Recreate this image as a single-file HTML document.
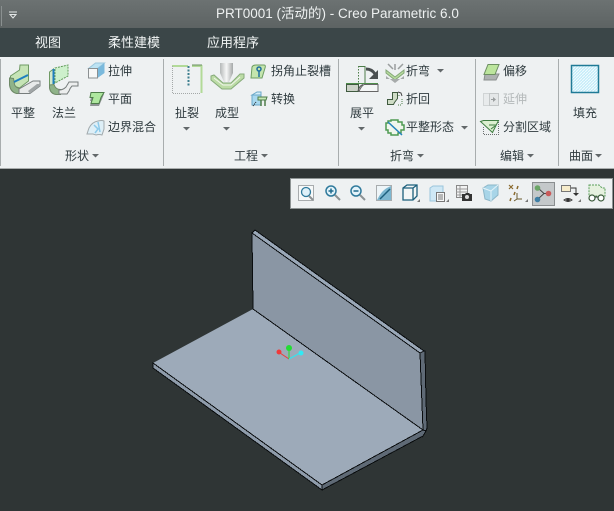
<!DOCTYPE html>
<html><head><meta charset="utf-8"><style>
html,body{margin:0;padding:0}
body{width:614px;height:511px;overflow:hidden;position:relative;background:#2f3535;font-family:"Liberation Sans","Noto Sans CJK SC",sans-serif}
.t{position:absolute;font-size:12px;line-height:16px;color:#2e3a3e;white-space:nowrap}
.m{position:absolute;font-size:13px;line-height:18px;color:#f2f5f5;white-space:nowrap;top:34px}
svg{position:absolute;left:0;top:0}
</style></head><body>
<div style="position:absolute;left:0;top:0;width:614px;height:28px;background:linear-gradient(#6c7272,#5d6363)"></div>
<div style="position:absolute;left:0;top:28px;width:614px;height:29px;background:#3b4648"></div>
<div style="position:absolute;left:0;top:57px;width:614px;height:111px;background:#eef1f2;border-bottom:1px solid #a9adad"></div>
<div style="position:absolute;left:290px;top:178px;width:323px;height:31px;background:#eef1f2;border:1px solid #8e9494;box-sizing:border-box"></div>
<div style="position:absolute;left:216px;top:5px;font-size:13.5px;line-height:18px;color:#eef1f1;white-space:nowrap">PRT0001 (活动的) - Creo Parametric 6.0</div>
<div class="m" style="left:35px">视图</div>
<div class="m" style="left:108px">柔性建模</div>
<div class="m" style="left:207px">应用程序</div>

<div class="t" style="left:11px;top:105px">平整</div>
<div class="t" style="left:52px;top:105px">法兰</div>
<div class="t" style="left:108px;top:63px">拉伸</div>
<div class="t" style="left:108px;top:91px">平面</div>
<div class="t" style="left:108px;top:119px">边界混合</div>
<div class="t" style="left:65px;top:148px">形状</div>
<div class="t" style="left:175px;top:105px">扯裂</div>
<div class="t" style="left:215px;top:105px">成型</div>
<div class="t" style="left:271px;top:63px">拐角止裂槽</div>
<div class="t" style="left:271px;top:91px">转换</div>
<div class="t" style="left:234px;top:148px">工程</div>
<div class="t" style="left:350px;top:105px">展平</div>
<div class="t" style="left:406px;top:63px">折弯</div>
<div class="t" style="left:406px;top:91px">折回</div>
<div class="t" style="left:406px;top:119px">平整形态</div>
<div class="t" style="left:390px;top:148px">折弯</div>
<div class="t" style="left:503px;top:63px">偏移</div>
<div class="t" style="left:503px;top:91px;color:#b4b9ba">延伸</div>
<div class="t" style="left:503px;top:119px">分割区域</div>
<div class="t" style="left:500px;top:148px">编辑</div>
<div class="t" style="left:573px;top:105px">填充</div>
<div class="t" style="left:569px;top:148px">曲面</div>

<svg width="614" height="511" viewBox="0 0 614 511">
<defs>
<linearGradient id="pn"><stop offset="0" stop-color="#b4b8b8"/><stop offset=".5" stop-color="#f6f7f7"/><stop offset="1" stop-color="#a4a8a8"/></linearGradient>
<pattern id="h" width="3" height="3" patternUnits="userSpaceOnUse"><rect width="3" height="3" fill="#c4ecf9"/><path d="M0 3L3 0" stroke="#f2fbfe"/></pattern>
</defs>
<!-- title bar -->
<rect x="1" y="6" width="1" height="20" fill="#8a9090"/>
<path d="M9 12h8M10 14.500h6l-3 3.500z" fill="none" stroke="#e4e8e8"/>
<!-- separators -->
<g fill="#a8adae"><rect x="0" y="59" width="1" height="107"/><rect x="163" y="59" width="1" height="107"/><rect x="338" y="59" width="1" height="107"/><rect x="475" y="59" width="1" height="107"/><rect x="558" y="59" width="1" height="107"/></g>
<!-- dropdown arrows -->
<g fill="#62686a">
<path d="M92 154h7l-3.500 3.500z"/><path d="M261 154h7l-3.500 3.500z"/><path d="M417 154h7l-3.500 3.500z"/><path d="M527 154h7l-3.500 3.500z"/><path d="M595 154h7l-3.500 3.500z"/>
<path d="M183 127h7l-3.500 3.500z"/><path d="M223 127h7l-3.500 3.500z"/><path d="M358 127h7l-3.500 3.500z"/>
<path d="M437 69h7l-3.500 3.500z"/><path d="M461 126h7l-3.500 3.500z"/>
</g>
<!-- 平整 -->
<path d="M20 65h8.500v16l-9 7-9-3v-9l9-6z" fill="#c6e4b6" stroke="#6f9a64"/>
<path d="M9.500 78v7q1 7 7 8.500h3v-5q-4-1-5-4l-1-6z" fill="#8fb389" stroke="#6f8a68"/>
<path d="M19 89l14-8h7v5l-10 7.500h-11z" fill="#e8eaea" stroke="#777d7d"/>
<path d="M28 91l9-7h3v2l-10 7.500z" fill="#a0a5a6"/>
<path d="M14 82l14-7" stroke="#1f7fbf" stroke-width="2"/>
<!-- 法兰 -->
<path d="M55 68l13-3v11l-13 7z" fill="#cdf0cc" stroke="#5f9a58" stroke-dasharray="2 1"/>
<path d="M49.500 72l4-3v17h-4z" fill="#d4e8ca" stroke="#6f9a64"/>
<path d="M49.500 85v3q1 6 7 6.500h4v-5q-5 0-6.500-5z" fill="#8fb389" stroke="#6f8a68"/>
<path d="M53.500 69v15" stroke="#1f7fbf" stroke-width="2"/>
<path d="M59 90q4 0 7-3l3-5h9v4h-6q-2 2-3 5l-2 3h-8z" fill="#eceeee" stroke="#777d7d"/>
<!-- 拉伸 -->
<path d="M88.500 68.500l7-5.500h9l-7 5.500z" fill="#bde3f3" stroke="#9ac6dc"/>
<path d="M97.500 68.500l7-5.500v10l-7 5z" fill="#7ab9dc"/>
<rect x="88.500" y="68.500" width="9" height="9.500" fill="#f6f7f7" stroke="#8b9092"/>
<!-- 平面 -->
<path d="M92 94h12l-2 5-3 7h-9l1-5-1 0z" fill="#8f9496"/>
<path d="M91 92.500h13l-3 5-2 6h-8l2-6h-3z" fill="#aee79f" stroke="#4e7d4a"/>
<!-- 边界混合 -->
<path d="M89 128q3-6 9-7 4-1 6 0l0 8-2 6q-3-1-6 0l-3-1-6 0z" fill="#deeff7" stroke="#a2aaad"/>
<path d="M94 125l4 4-3 4M98 122l2 10" stroke="#8ccaea" fill="none" stroke-width="1.500"/>
<!-- 扯裂 -->
<path d="M172 66h16M192 66h9.500V93" stroke="#b2da98" stroke-width="2" fill="none"/>
<path d="M192 65h10" stroke="#6b8e62" fill="none"/>
<path d="M172.500 66v27.500h28" stroke="#a4a8a8" stroke-dasharray="1 1" fill="none"/>
<path d="M188.500 66v20" stroke="#3e7f8f" stroke-width="2" stroke-dasharray="2 1.500"/>
<!-- 成型 -->
<path d="M220 63h13v10l-4 9h-5l-4-9z" fill="url(#pn)"/>
<path d="M211 76l3-1 9 8h8l9-9h4v4l-13 11h-9l-11-9z" fill="#bcdca6" stroke="#86ab7a"/>
<path d="M214 78l9 7h8l9-8" stroke="#f0f5ec" fill="none"/>
<!-- 拐角止裂槽 -->
<path d="M252 67q1-2 4-2h8q2 0 1 3l-3 10h-11z" fill="#c4e5ae" stroke="#6d9d62"/>
<circle cx="259" cy="69" r="2" fill="none" stroke="#1f6f9f" stroke-width="1.500"/><path d="M259 71v6" stroke="#1f6f9f" stroke-width="1.500"/>
<!-- 转换 -->
<path d="M252 95h9v10h-9z" fill="#a8d8ef" stroke="#6aa8c8"/><path d="M252 95l5-3h4v3z" fill="#d5eef9" stroke="#6aa8c8"/>
<path d="M258 97h9l-1 3h-8z" fill="#c5e8b5" stroke="#4e7d4a"/><path d="M261 100v6M265 100v6" stroke="#4e7d4a" stroke-width="1.500"/><path d="M256 102l-3 4" stroke="#222" stroke-dasharray="1 1"/>
<!-- 展平 -->
<path d="M358.500 66v17" stroke="#4e7d4a" stroke-dasharray="1.500 1.500"/>
<path d="M358.500 66.500h6.500v16.500" fill="none" stroke="#4e7d4a"/>
<path d="M346.500 84.500h12v7h-12z" fill="#ccd2c8" stroke="#3f5a3f"/>
<path d="M358 91q1-5 5-6.500" fill="#ccd2c8" stroke="#555"/>
<path d="M364 84.500h14v7h-19q2-5 5-7z" fill="#f4f6f6" stroke="#666"/>
<path d="M346 83.500h32" stroke="#4e8d4a"/>
<path d="M366 69q6 0 9 5" stroke="#4a4f50" stroke-width="3" fill="none"/><path d="M378 70v9h-9z" fill="#4a4f50"/>
<!-- 折弯 icon -->
<path d="M388 64l5 5M403 64l-5 5M395 64v6" stroke="#9a9e9e" fill="none" stroke-width="1.500"/>
<path d="M386 70l9 7 9-7v3l-9 7-9-7z" fill="#b8dc9f" stroke="#84a878"/>
<path d="M386 76l9 7 9-7v3h-5l-4 0-4 0h-5z" fill="#a7abab"/>
<!-- 折回 -->
<path d="M387.500 104.500v-5h5v-7h5v6l-3 4-1 2z" fill="#cfdcc6" stroke="#3f5a3f"/>
<path d="M399 95v1M402 99v6M398 105h4" stroke="#4e7d4a" stroke-dasharray="1 1" fill="none"/>
<path d="M398 92l3 1 1 3" stroke="#444" fill="none"/>
<!-- 平整形态 -->
<path d="M391 120h7v2h4v3h2v5h-3v3h-3v2h-7v-2h-3v-3h-2v-7h2v-2h3z" fill="#f0f6ec" stroke="#4e9a52" stroke-width="1.500"/>
<path d="M388 122l14 13" stroke="#2683bb" stroke-width="1.500"/>
<!-- 偏移 -->
<path d="M485 74h14l-3 6h-12z" fill="#aeb2b2" stroke="#8a8e8e"/>
<path d="M488 64.500h11l-4 10h-11z" fill="#bce59d" stroke="#6d8f62"/>
<!-- 延伸 -->
<rect x="483.500" y="93.500" width="6" height="12" fill="#e8ebec" stroke="#d0d4d5"/>
<rect x="489.500" y="93.500" width="9" height="12" fill="#e4e7e8" stroke="#c3c7c8"/>
<path d="M491 99.500h4" stroke="#9a9e9f"/><path d="M493 97l3 2.500-3 2.500z" fill="#9a9e9f"/>
<!-- 分割区域 -->
<path d="M483.500 127v7.500h15v-14" fill="none" stroke="#6b7070" stroke-dasharray="1 1"/>
<path d="M483.500 120.500h15l-3 6-3 6-12-11z" fill="#dcf0d0" stroke="#3f7d42"/>
<path d="M489 125l7 0M491 129l4-3" stroke="#3f7d42"/>
<!-- 填充 -->
<rect x="571.500" y="65.500" width="27" height="27" fill="url(#h)" stroke="#1f7a96" stroke-width="1.500"/>

<!-- mini toolbar -->
<rect x="532.500" y="182.500" width="22" height="23" fill="#c4c8ca" stroke="#8a8e90"/>
<!-- refit -->
<rect x="298.500" y="185.500" width="15" height="15" fill="#f7f9f9" stroke="#a8acae"/>
<circle cx="306" cy="192" r="4.500" fill="#dff1f9" stroke="#2f7a9c" stroke-width="1.300"/><path d="M309 196l4 4" stroke="#8c9294" stroke-width="2"/>
<!-- zoom in -->
<circle cx="331" cy="191" r="5" fill="#e3f3fa" stroke="#2f7a9c" stroke-width="1.500"/><path d="M328.500 191h5M331 188.500v5" stroke="#1f6a8c" stroke-width="1.500"/><path d="M335 195l5 5" stroke="#8c9294" stroke-width="2"/>
<!-- zoom out -->
<circle cx="356" cy="191" r="5" fill="#e3f3fa" stroke="#2f7a9c" stroke-width="1.500"/><path d="M353.500 191h5" stroke="#1f6a8c" stroke-width="1.500"/><path d="M360 195l5 5" stroke="#8c9294" stroke-width="2"/>
<!-- repaint -->
<rect x="376.500" y="185.500" width="15" height="15" fill="#7db7d0" stroke="#a8acae"/><path d="M377 186h14q-5 2-8 5t-6 9z" fill="#eef5f8"/><path d="M380 199l10-10" stroke="#1c5f7c" stroke-width="1.500"/>
<!-- display style cube -->
<path d="M403 188l4-3h10v11l-4 4h-10z" fill="#f3f6f6" stroke="#1c5f7c" stroke-width="1.300"/><path d="M403 188h10v12M413 188l4-3" fill="none" stroke="#1c5f7c" stroke-width="1.300"/>
<path d="M417 202h3v-3z" fill="#777"/>
<!-- saved orientations -->
<path d="M430 188l3-2h10v13l-3 2h-10z" fill="#cfe8f5" stroke="#9ac5dc"/><rect x="436.500" y="192.500" width="8" height="9" fill="#f6f7f7" stroke="#777"/><path d="M438 195h5M438 197h5M438 199h5" stroke="#777"/>
<path d="M446 202h3v-3z" fill="#777"/>
<!-- view manager -->
<path d="M456.500 185.500h11v12h-11z" fill="#f2f3f3" stroke="#888"/><path d="M456 189h11M456 192h11M456 195h11M460 186v11" stroke="#999"/>
<path d="M462 194h3l1-1h3l1 1h2v7h-10z" fill="#333"/><circle cx="467" cy="197" r="2" fill="#ddd"/>
<!-- perspective -->
<path d="M483 188l5-3h10v10l-7 6-6-2z" fill="#a8d5e8" stroke="#8cb6c8"/><path d="M483 188l8 3v10M491 191l7-6" stroke="#e4f3f9" fill="none"/>
<!-- datum -->
<path d="M509 185l4 4M513 185l-4 4" stroke="#8a6a2e" stroke-width="1.200"/><path d="M518 186l-1 3M515 192l-1 3M511 198l-1 3" stroke="#8a6a2e" stroke-width="1.500"/>
<path d="M517 193v6h5M517 199l-3 2" stroke="#6a5a2e" fill="none"/>
<path d="M525 202h3v-3z" fill="#777"/>
<!-- spin center -->
<path d="M538 188l6 5.500-6 5.500M544 193.500h5" stroke="#444" fill="none"/>
<circle cx="537.500" cy="188" r="2.800" fill="#6aa566"/><circle cx="537.500" cy="199.500" r="2.800" fill="#3f7fa5"/><circle cx="548.500" cy="193.500" r="2.800" fill="#c95a5a"/>
<!-- annotation -->
<rect x="561.500" y="185.500" width="9" height="6" fill="#f6eccb" stroke="#777"/><path d="M571 188h5v6" stroke="#333" fill="none"/><path d="M573 193h6l-3 3z" fill="#333"/>
<path d="M564 200q4-3 8 0q-4 3-8 0z" fill="#fff" stroke="#333"/><circle cx="568" cy="200" r="1.800" fill="#333"/>
<path d="M578 202h3v-3z" fill="#777"/>
<!-- glasses -->
<path d="M589 185h10l3 3h3v8h-16z" fill="#e6f1df" stroke="#5aa05a" stroke-dasharray="2 1"/>
<circle cx="592" cy="198" r="3" fill="#fff" stroke="#3a5a3a" stroke-width="1.200"/><circle cx="601" cy="198" r="3" fill="#fff" stroke="#3a5a3a" stroke-width="1.200"/><path d="M595 197h3" stroke="#333"/>

<!-- model -->
<path d="M153 363L253 309L423 430L322 485Z" fill="#9daab9"/>
<g stroke="#0a0d0f" stroke-width="1" shape-rendering="crispEdges" stroke-linejoin="miter">
<path d="M252 233L420 353L423 430L253 309Z" fill="#8a96a4"/>
<path d="M252 233L255 230L424 351L420 353Z" fill="#9aa8b8"/>
<path d="M420 353L424 351L425 351L426 400L427 428L426 431L423 436L423 430Z" fill="#5f6a76"/>
<path d="M253 309L423 430L322 485" fill="none"/>
<path d="M153 363L322 485V490L153 368Z" fill="#8f9cab"/>
<path d="M322 485L423 430L426 431L423 436L322 490Z" fill="#5f6a76"/>
</g>
<path d="M289 359l-9-6" stroke="#ef3a3a"/><path d="M289 359v-10" stroke="#28d828"/><path d="M289 359l11-6" stroke="#30e6ef"/>
<circle cx="279" cy="352" r="2.500" fill="#f03a3a"/><circle cx="289" cy="348" r="3" fill="#22dd33"/><circle cx="301" cy="353" r="2.500" fill="#30eaf5"/>
</svg>
</body></html>
